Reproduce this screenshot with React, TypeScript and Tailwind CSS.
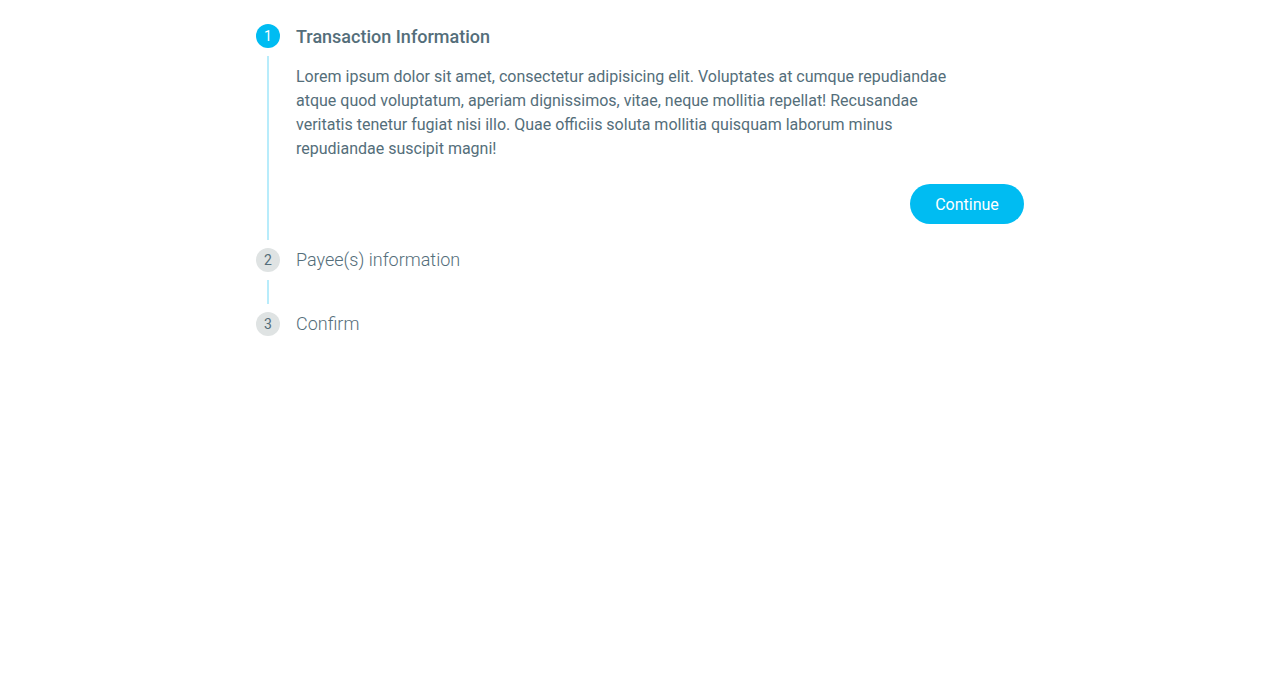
import React from "react";

export default function App() {
  return (
    <div className="min-h-[694px] bg-white" style={{ fontFamily: "Roboto, 'Noto Sans', sans-serif" }}>
      <div className="mx-auto w-[768px] pt-6">
        {/* Step 1 */}
        <div className="flex items-center gap-4 h-6">
          <div className="w-6 h-6 rounded-full bg-[#00bcf2] text-white text-sm flex items-center justify-center">1</div>
          <div className="text-lg font-medium text-[#546e7a] pt-[2px]">Transaction Information</div>
        </div>
        <div className="flex pt-2">
          <div className="w-6 flex justify-center shrink-0">
            <div className="w-[2px] h-[184px] bg-[#b8ecfb]" />
          </div>
          <div className="flex-1 pl-4 pt-[9px]">
            <p className="w-[672px] text-base leading-6 text-[#546e7a]">
              Lorem ipsum dolor sit amet, consectetur adipisicing elit. Voluptates at cumque repudiandae atque quod voluptatum, aperiam dignissimos, vitae, neque mollitia repellat! Recusandae veritatis tenetur fugiat nisi illo. Quae officiis soluta mollitia quisquam laborum minus repudiandae suscipit magni!
            </p>
            <div className="flex justify-end mt-[23px]">
              <button className="h-10 w-[114px] rounded-full bg-[#00bcf2] text-white text-base pt-[2px]">Continue</button>
            </div>
          </div>
        </div>
        {/* Step 2 */}
        <div className="flex items-center gap-4 h-6 mt-2">
          <div className="w-6 h-6 rounded-full bg-[#dfe3e3] text-[#546e7a] text-sm flex items-center justify-center">2</div>
          <div className="text-lg font-light text-[#546e7a]">Payee(s) information</div>
        </div>
        <div className="flex pt-2">
          <div className="w-6 flex justify-center">
            <div className="w-[2px] h-6 bg-[#b8ecfb]" />
          </div>
        </div>
        {/* Step 3 */}
        <div className="flex items-center gap-4 h-6 mt-2">
          <div className="w-6 h-6 rounded-full bg-[#dfe3e3] text-[#546e7a] text-sm flex items-center justify-center">3</div>
          <div className="text-lg font-light text-[#546e7a]">Confirm</div>
        </div>
      </div>
    </div>
  );
}
